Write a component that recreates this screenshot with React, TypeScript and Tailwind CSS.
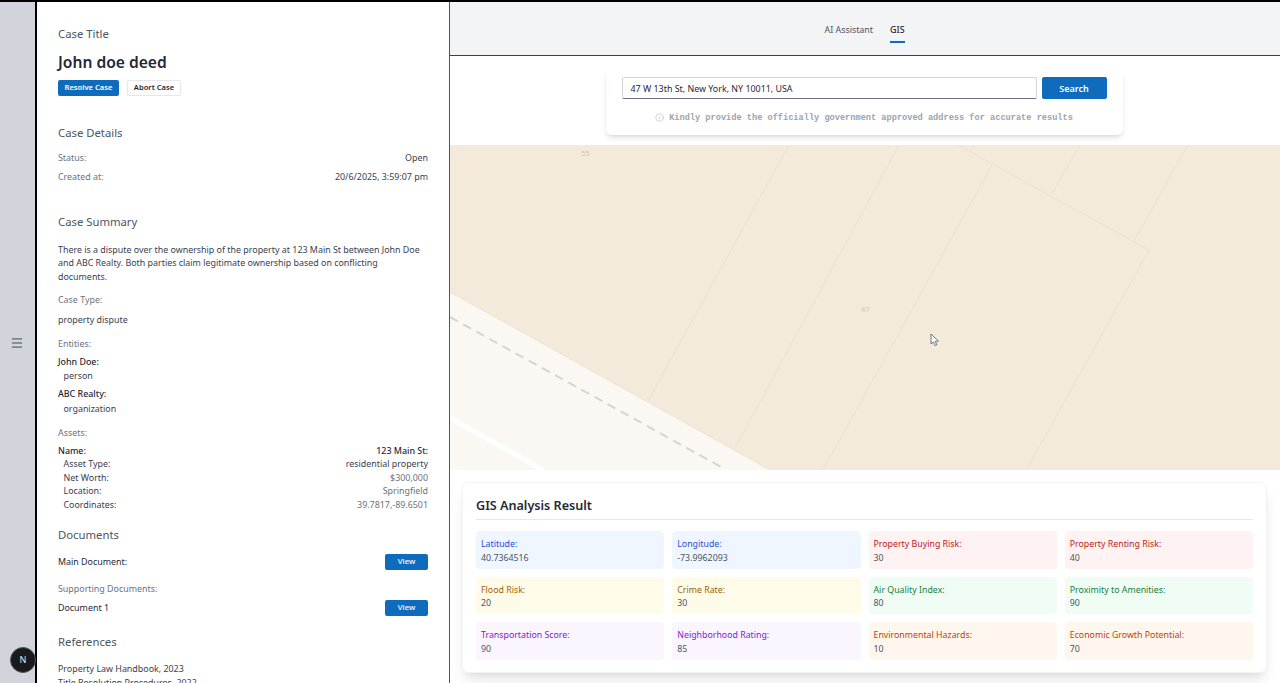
import { Menu, Info } from 'lucide-react'

const results = [
  { label: 'Latitude:', value: '40.7364516', bg: 'bg-[#eff6ff]', text: 'text-[#1d4ed8]' },
  { label: 'Longitude:', value: '-73.9962093', bg: 'bg-[#eff6ff]', text: 'text-[#1d4ed8]' },
  { label: 'Property Buying Risk:', value: '30', bg: 'bg-[#fef2f2]', text: 'text-[#b91c1c]' },
  { label: 'Property Renting Risk:', value: '40', bg: 'bg-[#fef2f2]', text: 'text-[#b91c1c]' },
  { label: 'Flood Risk:', value: '20', bg: 'bg-[#fefce8]', text: 'text-[#a16207]' },
  { label: 'Crime Rate:', value: '30', bg: 'bg-[#fefce8]', text: 'text-[#a16207]' },
  { label: 'Air Quality Index:', value: '80', bg: 'bg-[#f0fdf4]', text: 'text-[#15803d]' },
  { label: 'Proximity to Amenities:', value: '90', bg: 'bg-[#f0fdf4]', text: 'text-[#15803d]' },
  { label: 'Transportation Score:', value: '90', bg: 'bg-[#faf5ff]', text: 'text-[#7e22ce]' },
  { label: 'Neighborhood Rating:', value: '85', bg: 'bg-[#faf5ff]', text: 'text-[#7e22ce]' },
  { label: 'Environmental Hazards:', value: '10', bg: 'bg-[#fff7ed]', text: 'text-[#c2410c]' },
  { label: 'Economic Growth Potential:', value: '70', bg: 'bg-[#fff7ed]', text: 'text-[#c2410c]' },
]

function Heading({ children, className }: { children: string; className: string }) {
  return <h2 className={`text-[11.3px] leading-[16px] text-[#4b5563] ${className}`}>{children}</h2>
}

function Asset({ name, value, valueClass }: { name: string; value: string; valueClass: string }) {
  return (
    <div className="flex h-[13.5px] items-center justify-between">
      <span className="pl-[5.5px] text-[#374151]">{name}</span>
      <span className={valueClass}>{value}</span>
    </div>
  )
}

function ViewButton() {
  return (
    <button className="flex h-[16px] w-[43px] items-center justify-center rounded-[2px] bg-[#0f6cbd] text-[7.8px] font-medium text-white">
      View
    </button>
  )
}

function CasePanel() {
  return (
    <aside className="h-full w-[413px] shrink-0 overflow-hidden border-r-[1.5px] border-[#4b5563] bg-white pl-[21px] pr-[21px] pt-[24px] text-[8.9px] leading-[13.5px] text-[#374151]">
      <Heading className="">Case Title</Heading>
      <h1 className="mt-[9px] text-[15.6px] font-semibold leading-[22px] text-[#1f2937]">John doe deed</h1>
      <div className="mt-[7px] flex gap-[8px]">
        <button className="flex h-[16px] w-[61px] items-center justify-center rounded-[2px] bg-[#0f6cbd] text-[7.6px] font-semibold text-white">
          Resolve Case
        </button>
        <button className="flex h-[16px] w-[54px] items-center justify-center rounded-[2px] border border-[#e5e7eb] bg-white text-[7.6px] font-semibold text-[#1f2937]">
          Abort Case
        </button>
      </div>

      <Heading className="mt-[29px]">Case Details</Heading>
      <div className="mt-[10px] flex justify-between">
        <span className="text-[#6b7280]">Status:</span>
        <span>Open</span>
      </div>
      <div className="mt-[5px] flex justify-between">
        <span className="text-[#6b7280]">Created at:</span>
        <span>20/6/2025, 3:59:07 pm</span>
      </div>

      <Heading className="mt-[31px]">Case Summary</Heading>
      <p className="mt-[12.5px] text-[#374151]">
        There is a dispute over the ownership of the property at 123 Main St between John Doe and ABC Realty. Both parties claim legitimate ownership based on conflicting documents.
      </p>
      <div className="mt-[10px] text-[#6b7280]">Case Type:</div>
      <div className="mt-[6px]">property dispute</div>
      <div className="mt-[10.5px] text-[#6b7280]">Entities:</div>
      <div className="mt-[4.5px] font-medium text-[#1f2937]">John Doe:</div>
      <div className="mt-[1px] pl-[5.5px]">person</div>
      <div className="mt-[4.5px] font-medium text-[#1f2937]">ABC Realty:</div>
      <div className="mt-[1px] pl-[5.5px]">organization</div>
      <div className="mt-[10.5px] text-[#6b7280]">Assets:</div>
      <div className="mt-[4.5px] flex h-[13.5px] items-center justify-between font-medium text-[#1f2937]">
        <span>Name:</span>
        <span>123 Main St:</span>
      </div>
      <Asset name="Asset Type:" value="residential property" valueClass="text-[#374151]" />
      <Asset name="Net Worth:" value="$300,000" valueClass="text-[#6b7280]" />
      <Asset name="Location:" value="Springfield" valueClass="text-[#6b7280]" />
      <Asset name="Coordinates:" value="39.7817,-89.6501" valueClass="text-[#6b7280]" />

      <Heading className="mt-[15.5px]">Documents</Heading>
      <div className="mt-[11px] flex items-center justify-between">
        <span className="text-[#1f2937]">Main Document:</span>
        <ViewButton />
      </div>
      <div className="mt-[12px] text-[#6b7280]">Supporting Documents:</div>
      <div className="mt-[4.5px] flex items-center justify-between">
        <span className="text-[#1f2937]">Document 1</span>
        <ViewButton />
      </div>
      <Heading className="mt-[18.5px]">References</Heading>
      <div className="mt-[11.5px]">Property Law Handbook, 2023</div>
      <div className="mt-[1px]">Title Resolution Procedures, 2022</div>
    </aside>
  )
}

function MapView() {
  return (
    <div className="relative h-[325px] w-full shrink-0 bg-[#f3eadc]">
      <svg className="h-full w-full" viewBox="0 0 830 325" preserveAspectRatio="none" fill="none">
        <polygon points="0,147 320,325 0,325" fill="#fbf7f2" />
        <line x1="0" y1="147" x2="320" y2="325" stroke="#eee3d4" strokeWidth="1" />
        <line x1="0" y1="172" x2="273" y2="323" stroke="#d8d5d1" strokeWidth="2" strokeDasharray="9 6" />
        <line x1="0" y1="273" x2="93" y2="325" stroke="#ffffff" strokeWidth="5" />
        <g stroke="#ebe1d3" strokeWidth="1">
          <line x1="339" y1="0" x2="198.5" y2="255" />
          <line x1="449" y1="0" x2="285" y2="303" />
          <line x1="542.6" y1="19" x2="373" y2="325" />
          <line x1="508" y1="0" x2="699" y2="105" />
          <line x1="524" y1="0" x2="521" y2="7" />
          <line x1="630" y1="0" x2="601" y2="50" />
          <line x1="738" y1="0" x2="683" y2="98" />
          <line x1="699" y1="105" x2="577" y2="324" />
        </g>
      </svg>
      <span className="absolute left-[131px] top-[3px] text-[7.5px] leading-[10px] text-[#dcc3a3]">55</span>
      <span className="absolute left-[411px] top-[159px] text-[7.5px] leading-[10px] text-[#dcc3a3]">47</span>
      <svg className="absolute left-[480px] top-[188px]" width="10" height="14" viewBox="0 0 10 14">
        <path d="M1 1 L1 11 L3.4 8.9 L5 12.6 L6.8 11.8 L5.2 8.3 L8.4 8.1 Z" fill="#fff" stroke="#4b5563" strokeWidth="0.8" />
      </svg>
    </div>
  )
}

export default function App() {
  return (
    <div className="flex h-[683px] w-[1280px] overflow-hidden border-t-2 border-black bg-white font-['Noto_Sans',sans-serif]">
      <div className="relative flex h-full w-[37px] shrink-0 items-center justify-center border-r-2 border-black bg-[#d1d5db] pr-[2px]">
        <Menu size={14} strokeWidth={1.6} className="text-[#374151]" />
        <div className="absolute left-[10px] top-[645px] z-10 flex h-[26px] w-[26px] items-center justify-center rounded-full border border-[#4b5563] bg-[#1a1a1a] text-[9px] text-[#e5e7eb]">
          N
        </div>
      </div>

      <CasePanel />

      <main className="flex h-full min-w-0 flex-1 flex-col bg-white">
        <div className="flex h-[53.5px] shrink-0 items-start justify-center gap-[17px] border-b-[1.5px] border-[#374151] bg-[#f3f4f6] pr-[1px] text-[8.9px]">
          <span className="mt-[21px] text-[#4b5563]">AI Assistant</span>
          <span className="mt-[21px] flex h-[20px] flex-col justify-between border-b-2 border-[#0f6cbd] font-medium text-[#1f2937]">GIS</span>
        </div>

        <div className="flex h-[89.5px] shrink-0 justify-center pr-[2px] pt-[13px]">
          <div className="flex h-[66px] w-[517px] flex-col rounded-[6px] bg-white px-[16px] pt-[8.5px] shadow-md">
            <div className="flex gap-[5px]">
              <div className="flex h-[22px] flex-1 items-center rounded-[2px] border border-[#d1d5db] border-b-[#6b7280] pl-[8px] pt-[1px] text-[8.9px] text-[#1f2937]">
                47 W 13th St, New York, NY 10011, USA
              </div>
              <button className="flex h-[22px] w-[65px] items-center justify-center rounded-[2px] bg-[#0f6cbd] pt-[1px] text-[9px] font-semibold text-white">
                Search
              </button>
            </div>
            <div className="mt-[12.5px] flex items-center justify-center gap-[5px] font-['Liberation_Mono',monospace] text-[8.65px] font-bold leading-[12px] text-[#9ca3af]">
              <Info size={9} strokeWidth={1.2} />
              <span>Kindly provide the officially government approved address for accurate results</span>
            </div>
          </div>
        </div>

        <MapView />

        <div className="px-[12px] pr-[13px] pt-[12px]">
          <div className="h-[191px] rounded-[6px] border border-[#f3f4f6] bg-white px-[13px] pt-[13px] shadow-lg">
            <h3 className="border-b border-[#e5e7eb] pb-[3px] text-[12.6px] font-semibold leading-[20px] text-[#1f2937]">GIS Analysis Result</h3>
            <div className="mt-[11px] grid grid-cols-4 gap-x-[8px] gap-y-[8px]">
              {results.map((r) => (
                <div key={r.label} className={`h-[37.5px] rounded-[4px] px-[5px] pt-[7px] text-[8.8px] leading-[13.5px] ${r.bg}`}>
                  <div className={r.text}>{r.label}</div>
                  <div className="text-[#4b5563]">{r.value}</div>
                </div>
              ))}
            </div>
          </div>
        </div>
      </main>
    </div>
  )
}
